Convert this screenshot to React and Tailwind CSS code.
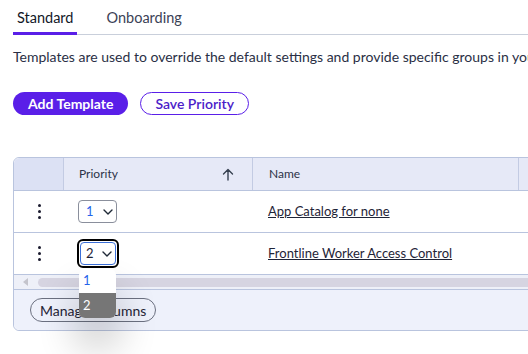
import React from "react";

const font = { fontFamily: "Lato, 'Noto Sans', sans-serif" };

function Dots() {
  return (
    <div className="flex flex-col items-center gap-[3px]">
      <span className="w-[3px] h-[3px] rounded-full bg-[#1a1a2e]" />
      <span className="w-[3px] h-[3px] rounded-full bg-[#1a1a2e]" />
      <span className="w-[3px] h-[3px] rounded-full bg-[#1a1a2e]" />
    </div>
  );
}

function Chevron() {
  return (
    <svg width="10" height="6" viewBox="0 0 10 6" fill="none">
      <path d="M1 1l4 4 4-4" stroke="#1f2937" strokeWidth="1.4" strokeLinecap="round" strokeLinejoin="round" />
    </svg>
  );
}

export default function App() {
  return (
    <div className="w-[528px] h-[354px] overflow-hidden bg-white text-[#1e2235]" style={font}>
      <div className="pl-[13px]">
        <div className="flex border-b border-[#c9cfdb] h-[35px] w-[600px]">
          <div className="relative px-[4px] pt-[1px] flex items-center text-[14.5px] text-[#111827]">
            Standard
            <span className="absolute left-0 right-0 -bottom-[1px] h-[3px] bg-[#5a1fe8]" />
          </div>
          <div className="ml-[29px] pt-[1px] flex items-center text-[14.5px] text-[#3b4256]">Onboarding</div>
        </div>
        <p className="mt-[13px] text-[14px] leading-[18px] whitespace-nowrap text-[#2a2f45]">
          Templates are used to override the default settings and provide specific groups in your
        </p>
        <div className="flex gap-[12px] mt-[26px]">
          <button className="h-[23px] px-[15px] rounded-full bg-[#5a1fe8] text-white text-[14px] font-bold">
            Add Template
          </button>
          <button className="h-[23px] px-[14px] rounded-full border border-[#5a1fe8] bg-white text-[#4c1dc9] text-[14px] font-semibold">
            Save Priority
          </button>
        </div>

        <div className="relative mt-[42px] w-[600px] border border-[#b9c4de] rounded-[6px] overflow-visible">
          {/* header */}
          <div className="flex h-[33px] bg-[#e6e9f7] border-b border-[#b9c4de] rounded-t-[6px]">
            <div className="w-[49px] bg-[#dce1f4] rounded-tl-[6px]" />
            <div className="w-[189px] flex items-center pl-[15px] pr-[14px] border-l border-[#c3cbe3] text-[12px] text-[#2d3348]">
              <span>Priority</span>
              <svg className="ml-auto mr-[4px]" width="12" height="13" viewBox="0 0 12 13" fill="none">
                <path d="M6 12V1.5M1.5 6L6 1.5 10.5 6" stroke="#374151" strokeWidth="1.4" strokeLinecap="round" strokeLinejoin="round" />
              </svg>
            </div>
            <div className="w-[266px] flex items-center pl-[16px] border-l border-[#c3cbe3] text-[12px] text-[#2d3348]">
              Name
            </div>
            <div className="flex-1 border-l border-[#c3cbe3]" />
          </div>
          {/* row 1 */}
          <div className="flex h-[42px] border-b border-[#b9c4de] bg-white">
            <div className="w-[49px] flex items-center justify-center pl-[1px]">
              <Dots />
            </div>
            <div className="w-[189px] flex items-center pl-[15px]">
              <div className="h-[23px] w-[39px] rounded-[4px] border border-[#8a8f9c] flex items-center pl-[7px] gap-[9px] text-[13px]">
                <span className="text-[#2563eb]">1</span>
                <Chevron />
              </div>
            </div>
            <div className="flex items-center pl-[16px] text-[13px] underline text-[#1f2437]">App Catalog for none</div>
          </div>
          {/* row 2 */}
          <div className="flex h-[42px] border-b border-[#b9c4de] bg-white">
            <div className="w-[49px] flex items-center justify-center pl-[1px]">
              <Dots />
            </div>
            <div className="w-[189px] flex items-center pl-[14px]">
              <div className="h-[29px] w-[42px] rounded-[6px] border-2 border-black p-[1px]">
                <div className="h-full w-full rounded-[4px] border border-[#3b6fd8] flex items-center pl-[5px] gap-[8px] text-[13px]">
                  <span>2</span>
                  <Chevron />
                </div>
              </div>
            </div>
            <div className="flex items-center pl-[16px] text-[13px] underline text-[#1f2437]">Frontline Worker Access Control</div>
          </div>
          {/* scrollbar */}
          <div className="flex items-center h-[15px] bg-[#eef0f8] border-b border-[#b9c4de]">
            <svg className="ml-[9px]" width="6" height="8" viewBox="0 0 6 8">
              <path d="M5 0L0 4l5 4z" fill="#c4c4cc" />
            </svg>
            <div className="ml-[9px] flex-1 h-[9px] rounded-l-full bg-[#d6d4e1]" />
          </div>
          {/* footer */}
          <div className="h-[40px] bg-[#eef1fb] flex items-center pl-[16px] rounded-b-[6px]">
            <button className="h-[24px] px-[9px] rounded-full border border-[#6b7080] text-[14px] text-[#1f2437] bg-[#eef1fb]">
              Manage Columns
            </button>
          </div>

          {/* dropdown */}
          <div className="absolute left-[65px] top-[111px] w-[37px] rounded-[6px] bg-white overflow-hidden shadow-[0_26px_36px_6px_rgba(0,0,0,0.16)] text-[13px]">
            <div className="h-[24px] flex items-center pl-[4px] text-[#2563eb]">1</div>
            <div className="h-[25px] flex items-center pl-[4px] bg-[#767676] text-white">2</div>
          </div>
        </div>
      </div>
    </div>
  );
}
